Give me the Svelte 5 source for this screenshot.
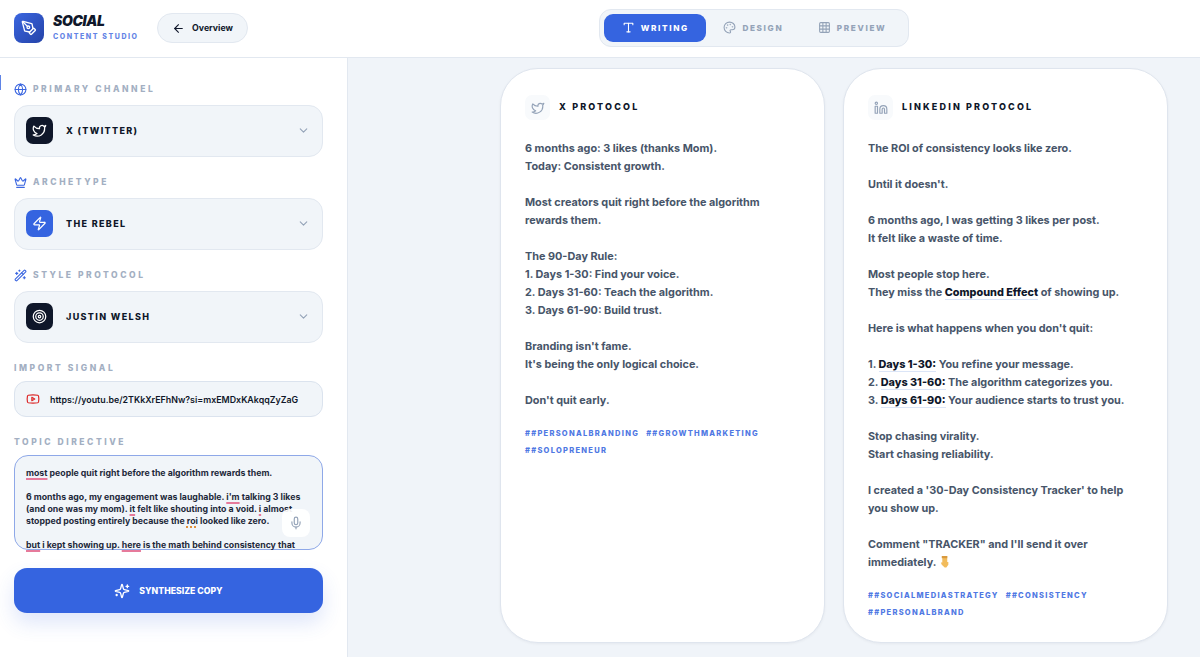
<script>
  const paths = {
    pen: '<path d="M15.707 21.293a1 1 0 0 1-1.414 0l-1.586-1.586a1 1 0 0 1 0-1.414l5.586-5.586a1 1 0 0 1 1.414 0l1.586 1.586a1 1 0 0 1 0 1.414z"/><path d="m18 13-1.375-6.874a1 1 0 0 0-.746-.776L3.235 2.028a1 1 0 0 0-1.207 1.207L5.35 15.879a1 1 0 0 0 .776.746L13 18"/><path d="m2.3 2.3 7.286 7.286"/><circle cx="11" cy="11" r="2"/>',
    arrow: '<path d="m12 19-7-7 7-7"/><path d="M19 12H5"/>',
    type: '<polyline points="4 7 4 4 20 4 20 7"/><line x1="9" y1="20" x2="15" y2="20"/><line x1="12" y1="4" x2="12" y2="20"/>',
    palette: '<path d="M12 22a1 1 0 0 1 0-20 10 9 0 0 1 10 9 5 5 0 0 1-5 5h-2.25a1.75 1.75 0 0 0-1.4 2.8l.3.4a1.75 1.75 0 0 1-1.4 2.8z"/><circle cx="13.5" cy="6.5" r=".5"/><circle cx="17.5" cy="10.5" r=".5"/><circle cx="6.5" cy="12.5" r=".5"/><circle cx="8.5" cy="7.5" r=".5"/>',
    grid: '<rect x="3" y="3" width="18" height="18" rx="2"/><path d="M3 9h18M3 15h18M9 3v18M15 3v18"/>',
    globe: '<circle cx="12" cy="12" r="10"/><path d="M12 2a14.5 14.5 0 0 0 0 20 14.5 14.5 0 0 0 0-20"/><path d="M2 12h20"/>',
    twitter: '<path d="M22 4s-.7 2.1-2 3.4c1.6 10-9.4 17.3-18 11.6 2.2.1 4.4-.6 6-2C3 15.5.5 9.6 3 5c2.2 2.6 5.6 4.1 9 4-.9-4.2 4-6.6 7-3.8 1.1 0 3-1.2 3-1.2z"/>',
    crown: '<path d="M11.562 3.266a.5.5 0 0 1 .876 0L15.39 8.87a1 1 0 0 0 1.516.294L21.183 5.5a.5.5 0 0 1 .798.519l-2.834 10.246a1 1 0 0 1-.956.734H5.81a1 1 0 0 1-.957-.734L2.02 6.02a.5.5 0 0 1 .798-.519l4.276 3.664a1 1 0 0 0 1.516-.294z"/><path d="M5 21h14"/>',
    zap: '<path d="M4 14a1 1 0 0 1-.78-1.63l9.9-10.2a.5.5 0 0 1 .86.46l-1.92 6.02A1 1 0 0 0 13 10h7a1 1 0 0 1 .78 1.63l-9.9 10.2a.5.5 0 0 1-.86-.46l1.92-6.02A1 1 0 0 0 11 14z"/>',
    wand: '<path d="m21.64 3.64-1.28-1.28a1.21 1.21 0 0 0-1.72 0L2.36 18.64a1.21 1.21 0 0 0 0 1.72l1.28 1.28a1.2 1.2 0 0 0 1.72 0L21.64 5.36a1.2 1.2 0 0 0 0-1.72"/><path d="m14 7 3 3M5 6v4M19 14v4M10 2v2M7 8H3M21 16h-4M11 3H9"/>',
    target: '<circle cx="12" cy="12" r="10"/><circle cx="12" cy="12" r="6"/><circle cx="12" cy="12" r="2"/>',
    youtube: '<path d="M2.5 17a24.12 24.12 0 0 1 0-10 2 2 0 0 1 1.4-1.4 49.56 49.56 0 0 1 16.2 0A2 2 0 0 1 21.5 7a24.12 24.12 0 0 1 0 10 2 2 0 0 1-1.4 1.4 49.55 49.55 0 0 1-16.2 0A2 2 0 0 1 2.5 17"/><path d="m10 15 5-3-5-3z"/>',
    mic: '<path d="M12 2a3 3 0 0 0-3 3v7a3 3 0 0 0 6 0V5a3 3 0 0 0-3-3Z"/><path d="M19 10v2a7 7 0 0 1-14 0v-2"/><line x1="12" y1="19" x2="12" y2="22"/>',
    sparkles: '<path d="M9.937 15.5A2 2 0 0 0 8.5 14.063l-6.135-1.582a.5.5 0 0 1 0-.962L8.5 9.936A2 2 0 0 0 9.937 8.5l1.582-6.135a.5.5 0 0 1 .963 0L14.063 8.5A2 2 0 0 0 15.5 9.937l6.135 1.581a.5.5 0 0 1 0 .964L15.5 14.063a2 2 0 0 0-1.437 1.437l-1.582 6.135a.5.5 0 0 1-.963 0z"/><path d="M20 3v4M22 5h-4M4 17v2M5 18H3"/>',
    linkedin: '<path d="M16 8a6 6 0 0 1 6 6v7h-4v-7a2 2 0 0 0-2-2 2 2 0 0 0-2 2v7h-4v-7a6 6 0 0 1 6-6z"/><rect x="2" y="9" width="4" height="12"/><circle cx="4" cy="4" r="2"/>',
    chevron: '<path d="m6 9 6 6 6-6"/>'
  };

  const tabs = [
    { label: "WRITING", icon: "type", active: true },
    { label: "DESIGN", icon: "palette" },
    { label: "PREVIEW", icon: "grid" }
  ];

  const selects = [
    { label: "PRIMARY CHANNEL", labelIcon: "globe", value: "X (TWITTER)", icon: "twitter", tone: "dark" },
    { label: "ARCHETYPE", labelIcon: "crown", value: "THE REBEL", icon: "zap", tone: "blue" },
    { label: "STYLE PROTOCOL", labelIcon: "wand", value: "JUSTIN WELSH", icon: "target", tone: "dark" }
  ];
</script>

{#snippet icon(name, cls)}
  <svg class="ic {cls}" viewBox="0 0 24 24" fill="none" stroke="currentColor" stroke-width="2" stroke-linecap="round" stroke-linejoin="round">
    {@html paths[name]}
  </svg>
{/snippet}

<div class="app">
  <header class="topbar">
    <div class="brand">
      <div class="logo">{@render icon("pen", "s16")}</div>
      <div class="brand-text">
        <div class="brand-name">SOCIAL</div>
        <div class="brand-sub">CONTENT STUDIO</div>
      </div>
      <button class="back">{@render icon("arrow", "s13")}Overview</button>
    </div>
    <nav class="tabs">
      {#each tabs as t}
        <div class="tab" class:active={t.active}>{@render icon(t.icon, "s13")}{t.label}</div>
      {/each}
    </nav>
  </header>

  <div class="body">
    <aside class="side">
      <span class="marker"></span>
      {#each selects as s}
        <section class="group">
          <div class="label">{@render icon(s.labelIcon, "s13 blue")}{s.label}</div>
          <div class="select">
            <span class="badge {s.tone}">{@render icon(s.icon, "s15")}</span>
            <span class="select-value">{s.value}</span>
            {@render icon("chevron", "s13 chev")}
          </div>
        </section>
      {/each}

      <section class="group">
        <div class="label plain">IMPORT SIGNAL</div>
        <div class="url">
          {@render icon("youtube", "s14 red")}
          <span>https://youtu.be/2TKkXrEFhNw?si=mxEMDxKAkqqZyZaG</span>
        </div>
      </section>

      <section class="group">
        <div class="label plain">TOPIC DIRECTIVE</div>
        <div class="topic">
          <div class="topic-text">
            <u>most</u> people quit right before the algorithm rewards them.<br /><br />
            6 months ago, my engagement was laughable. <u>i'm</u> talking 3 likes<br />
            (and one was my mom). <u>it</u> felt like shouting into a void. <u>i</u> almost<br />
            stopped posting entirely because the <u class="dot">roi</u> looked like zero.<br /><br />
            <u>but</u> i kept showing up. <u>here</u> is the math behind consistency that
          </div>
          <div class="mic">{@render icon("mic", "s14")}</div>
        </div>
      </section>

      <button class="go">{@render icon("sparkles", "s16")}SYNTHESIZE COPY</button>
    </aside>

    <main class="main">
      <article class="card">
        <div class="card-head">
          <span class="card-icon">{@render icon("twitter", "s14")}</span>
          <h2>X PROTOCOL</h2>
        </div>
        <p class="copy">6 months ago: 3 likes (thanks Mom).
Today: Consistent growth.

Most creators quit right before the algorithm rewards them.

The 90-Day Rule:
1. Days 1-30: Find your voice.
2. Days 31-60: Teach the algorithm.
3. Days 61-90: Build trust.

Branding isn't fame.
It's being the only logical choice.

Don't quit early.</p>
        <div class="tags">
          <span>##PERSONALBRANDING</span><span>##GROWTHMARKETING</span><span>##SOLOPRENEUR</span>
        </div>
      </article>

      <article class="card">
        <div class="card-head">
          <span class="card-icon">{@render icon("linkedin", "s14")}</span>
          <h2>LINKEDIN PROTOCOL</h2>
        </div>
        <p class="copy">The ROI of consistency looks like zero.

Until it doesn't.

6 months ago, I was getting 3 likes per post.
It felt like a waste of time.

Most people stop here.
They miss the <b>Compound Effect</b> of showing up.

Here is what happens when you don't quit:

1. <b>Days 1-30:</b> You refine your message.
2. <b>Days 31-60:</b> The algorithm categorizes you.
3. <b>Days 61-90:</b> Your audience starts to trust you.

Stop chasing virality.
Start chasing reliability.

I created a '30-Day Consistency Tracker' to help you show up.

Comment "TRACKER" and I'll send it over immediately. <svg class="finger" viewBox="0 0 12 14"><path d="M3 1h6v6.5h1.2v3L8 13.5H6.2L3 10.5 2 8l1.6.2V1z" fill="#f2bc5c"/><path d="M3 1h6v2.4H3z" fill="#d99a3f"/></svg></p>
        <div class="tags">
          <span>##SOCIALMEDIASTRATEGY</span><span>##CONSISTENCY</span><span>##PERSONALBRAND</span>
        </div>
      </article>
    </main>
  </div>
</div>

<style>
  :global(body) {
    margin: 0;
    font-family: Inter, "Liberation Sans", sans-serif;
    background: #f0f4f9;
    color: #0f172a;
  }
  .app {
    height: 657px;
    overflow: hidden;
    display: flex;
    flex-direction: column;
  }
  .ic {
    display: block;
    flex: none;
  }
  .s13 { width: 13px; height: 13px; }
  .s14 { width: 14px; height: 14px; }
  .s15 { width: 15px; height: 15px; }
  .s16 { width: 16px; height: 16px; }
  .blue { color: #3b66e0; }
  .red { color: #dc2626; }
  .chev { color: #94a3b8; margin-left: auto; }

  .topbar {
    height: 57px;
    flex: none;
    background: #fff;
    border-bottom: 1px solid #e2e8f0;
    position: relative;
    display: flex;
    align-items: center;
    justify-content: center;
    padding-left: 308px;
  }
  .brand {
    position: absolute;
    left: 14px;
    top: 13px;
    display: flex;
    align-items: center;
  }
  .logo {
    width: 30px;
    height: 30px;
    border-radius: 8px;
    background: linear-gradient(135deg, #3b66e0, #2443a8);
    color: #fff;
    display: flex;
    align-items: center;
    justify-content: center;
  }
  .brand-text {
    margin-left: 9px;
    width: 104px;
    margin-top: -2px;
  }
  .brand-name {
    font-size: 14px;
    line-height: 15px;
    font-weight: 900;
    font-style: italic;
    letter-spacing: -0.025em;
  }
  .brand-sub {
    margin-top: 4px;
    font-size: 7px;
    line-height: 9px;
    font-weight: 800;
    letter-spacing: 0.225em;
    color: #3b66e0;
    opacity: 0.8;
  }
  .back {
    width: 91px;
    height: 30px;
    border: 1px solid #e2e8f0;
    border-radius: 15px;
    background: #f1f5f9;
    color: #0f172a;
    font: 700 8.75px Inter, sans-serif;
    display: flex;
    align-items: center;
    justify-content: center;
    gap: 7px;
    padding: 0;
  }
  .tabs {
    height: 38px;
    box-sizing: border-box;
    margin-top: -2px;
    padding: 4px;
    border: 1px solid #e2e8f0;
    border-radius: 12px;
    background: #f1f5f9;
    display: flex;
  }
  .tab {
    flex: none;
    padding: 0 17.25px;
    border-radius: 9px;
    font-size: 8.2px;
    font-weight: 800;
    letter-spacing: 0.2em;
    color: #94a3b8;
    display: flex;
    align-items: center;
    justify-content: center;
    gap: 6px;
  }
  .tab.active {
    background: #3564e0;
    color: #fff;
  }

  .body {
    flex: 1;
    display: flex;
    min-height: 0;
  }
  .side {
    width: 348px;
    flex: none;
    box-sizing: border-box;
    padding: 24px 24px 0 14px;
    background: #fff;
    border-right: 1px solid #e2e8f0;
    position: relative;
  }
  .marker {
    position: absolute;
    left: 0;
    top: 17px;
    width: 1px;
    height: 15px;
    background: #5f84e6;
  }
  .group {
    margin-bottom: 19px;
  }
  .label {
    height: 12px;
    margin-bottom: 10px;
    font-size: 8.5px;
    line-height: 12px;
    font-weight: 800;
    letter-spacing: 0.3em;
    color: #a3afc2;
    display: flex;
    align-items: center;
    gap: 6px;
  }
  .label.plain {
    margin-bottom: 7px;
  }
  .group:first-of-type .label {
    padding-top: 1px;
  }
  .select {
    height: 52px;
    box-sizing: border-box;
    padding: 0 12px 1px 11px;
    border: 1px solid #e2e8f0;
    border-radius: 14px;
    background: #f1f5f9;
    display: flex;
    align-items: center;
    gap: 13px;
  }
  .badge {
    width: 27px;
    height: 27px;
    border-radius: 7px;
    color: #fff;
    display: flex;
    align-items: center;
    justify-content: center;
  }
  .badge.dark { background: #0f172a; }
  .badge.blue { background: #3564e0; color: #fff; }
  .select-value {
    font-size: 9px;
    font-weight: 800;
    letter-spacing: 0.15em;
  }
  .url {
    height: 36px;
    box-sizing: border-box;
    padding: 0 11px;
    border: 1px solid #dbe3ee;
    border-radius: 12px;
    background: #f1f5f9;
    font-size: 8.85px;
    font-weight: 600;
    display: flex;
    align-items: center;
    gap: 10px;
  }
  .topic {
    height: 95px;
    box-sizing: border-box;
    border: 1px solid #8ea8e8;
    border-radius: 14px;
    background: #f1f5f9;
    position: relative;
  }
  .topic-text {
    padding: 11px 11px 0;
    font-size: 8.75px;
    line-height: 12px;
    font-weight: 650;
    color: #1e293b;
    white-space: nowrap;
  }
  .topic-text u {
    text-decoration: underline #e67a9b 1.5px;
    text-decoration-skip-ink: none;
    text-underline-offset: 2px;
  }
  .topic-text u.dot {
    text-decoration-style: dotted;
    text-decoration-color: #e0903a;
  }
  .mic {
    position: absolute;
    right: 12px;
    top: 53px;
    width: 28px;
    height: 28px;
    border-radius: 8px;
    background: rgba(255, 255, 255, 0.92);
    color: #94a3b8;
    display: flex;
    align-items: center;
    justify-content: center;
  }
  .go {
    width: 100%;
    height: 45px;
    margin-top: -1px;
    border: 0;
    border-radius: 13px;
    background: #3564e0;
    color: #fff;
    font: 800 8.7px Inter, sans-serif;
    display: flex;
    align-items: center;
    justify-content: center;
    gap: 9px;
    padding: 0;
    box-shadow: 0 10px 20px rgba(53, 100, 224, 0.16);
  }

  .main {
    flex: 1;
    display: flex;
    justify-content: flex-end;
    gap: 18px;
    padding: 10px 32px 0 0;
    align-items: flex-start;
  }
  .card {
    width: 325px;
    height: 575px;
    box-sizing: border-box;
    padding: 26px 24px 0;
    border: 1px solid #dfe5ee;
    border-radius: 38px;
    background: #fff;
    box-shadow: 0 1px 3px rgba(15, 23, 42, 0.05);
  }
  .card-head {
    height: 25px;
    display: flex;
    align-items: center;
    gap: 9px;
  }
  .card-icon {
    width: 25px;
    height: 25px;
    border-radius: 7px;
    background: #f8fafc;
    color: #94a3b8;
    display: flex;
    align-items: center;
    justify-content: center;
  }
  h2 {
    margin: 0;
    padding-bottom: 2px;
    font-size: 9px;
    font-weight: 800;
    letter-spacing: 0.24em;
  }
  .copy {
    margin: 19px 0 0;
    font-size: 10.85px;
    line-height: 18px;
    font-weight: 650;
    color: #475569;
    white-space: pre-line;
  }
  .copy b {
    font-weight: 800;
    color: #0f172a;
    border-bottom: 1px solid #dbe5f7;
  }
  .finger {
    display: inline-block;
    width: 11px;
    height: 13px;
    vertical-align: -2px;
  }
  .tags {
    margin-top: 16px;
    display: flex;
    flex-wrap: wrap;
    column-gap: 7px;
    font-size: 7.5px;
    line-height: 17px;
    font-weight: 800;
    letter-spacing: 0.17em;
    color: #4f78e3;
  }
</style>
